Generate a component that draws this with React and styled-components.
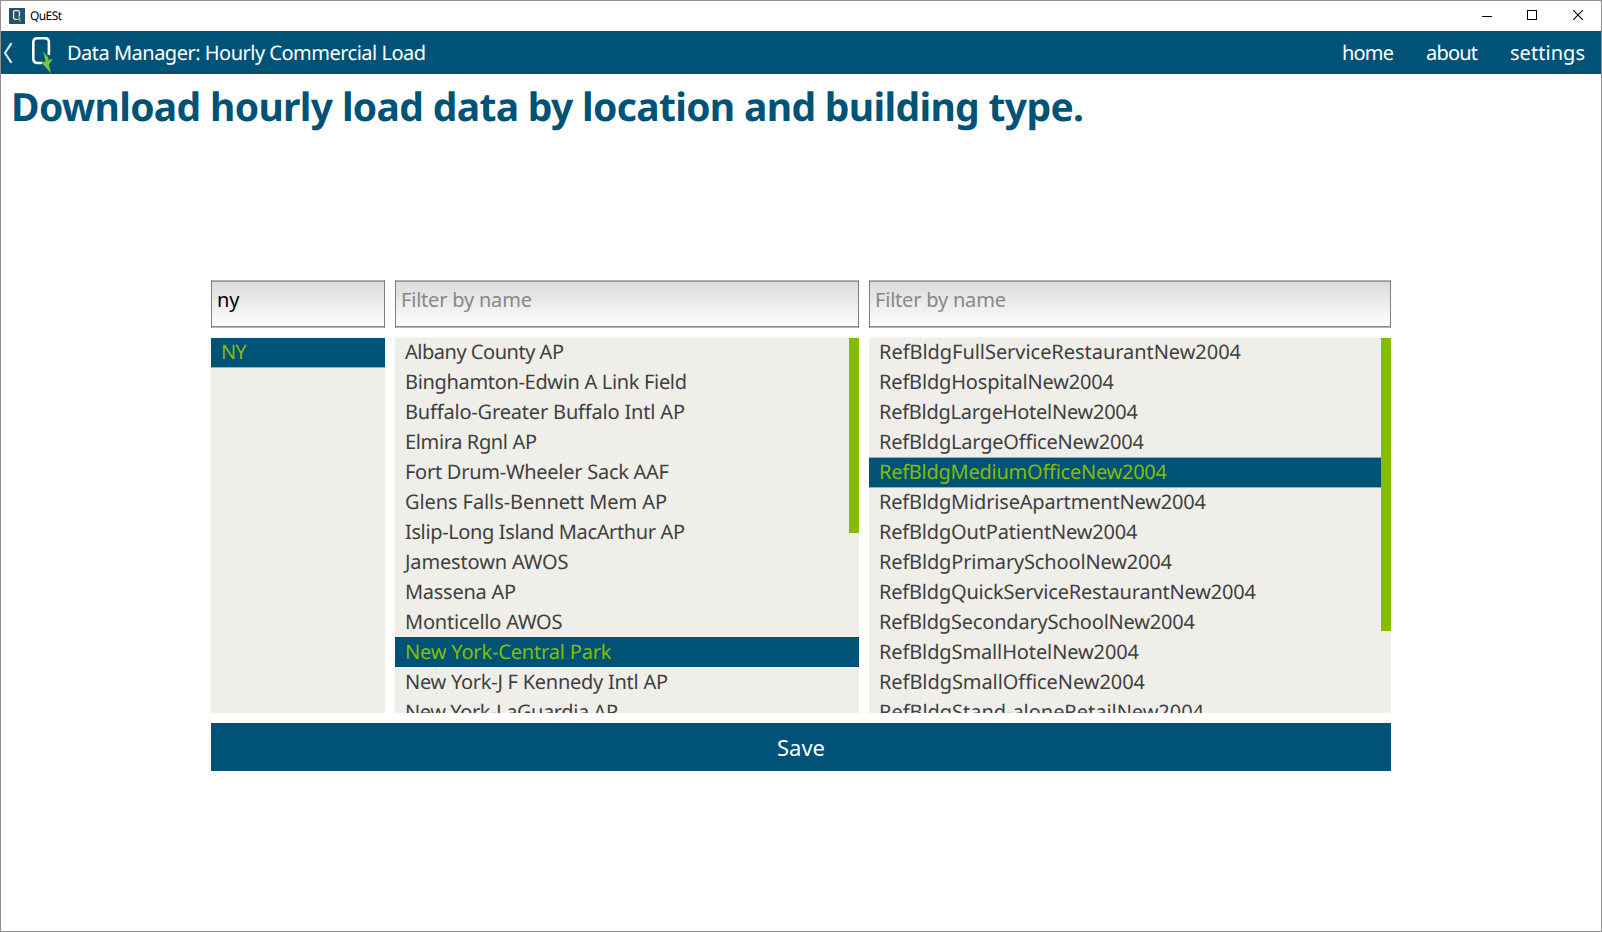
import React, { useLayoutEffect, useRef, useState } from "react";
import styled, { createGlobalStyle, css } from "styled-components";

const BLUE = "#005376";
const GREEN = "#84bd00";
const PANEL = "#efeee9";

const GlobalStyle = createGlobalStyle`
  *, *::before, *::after { box-sizing: border-box; }
  body {
    margin: 0;
    background: #fff;
    font-family: "Noto Sans", "Open Sans", sans-serif;
    text-rendering: geometricPrecision;
  }
`;

const Window = styled.div`
  display: flex;
  flex-direction: column;
  width: 1602px;
  height: 932px;
  border: 1px solid #919191;
  background: #fff;
  overflow: hidden;
`;

const TitleBar = styled.header`
  display: flex;
  align-items: center;
  height: 30px;
  padding: 0 17px 0 8px;
`;

const AppName = styled.span`
  flex: 1;
  margin-left: 5px;
  font-size: 12px;
  line-height: 16px;
  color: #000;
`;

const WindowControls = styled.div`
  display: flex;
  gap: 35px;
  margin-top: -2px;

  svg { display: block; }
`;

const NavBar = styled.nav`
  display: flex;
  align-items: center;
  height: 43px;
  padding: 0 16px 0 2px;
  background: ${BLUE};
  color: #fff;
  font-size: 20px;
  line-height: 30px;
`;

const LogoSvg = styled.svg`
  margin: 4px 0 0 18px;
`;

const NavTitle = styled.div`
  flex: 1;
  margin-left: 14px;
`;

const NavLinks = styled.div`
  display: flex;
  gap: 32px;
`;

const NavLink = styled.a`
  color: #fff;
`;

const Heading = styled.h1`
  margin: 0;
  padding: 8px 0 0 10px;
  height: 206px;
  font-size: 39px;
  line-height: 50px;
  font-weight: 700;
  color: ${BLUE};
`;

const Picker = styled.main`
  display: grid;
  grid-template-columns: 174px 464px 522px;
  grid-template-rows: 48px 376px 48px;
  column-gap: 10px;
  row-gap: 9px;
  justify-content: center;
`;

const FilterInput = styled.input`
  width: 100%;
  height: 48px;
  padding: 0 5px 9px;
  border: 1px solid #7c7c7c;
  border-top-color: #b5b5b5;
  border-bottom-color: #b5b5b5;
  border-radius: 0;
  outline: none;
  background: linear-gradient(#dcdcdc, #e6e6e6 35%, #fff);
  box-shadow: inset 0 1px #9a9a9a, inset 0 -1px #8c8c8c;
  font: 20px/28px "Noto Sans", sans-serif;
  letter-spacing: ${(p) => p.$tracking || 0}px;
  color: #000;

  &::placeholder { color: #888; opacity: 1; }
`;

const ListPanel = styled.section`
  display: flex;
  height: 376px;
  overflow: hidden;
  background: ${PANEL};
  border-top: 1px solid #f7f6f4;
`;

const Rows = styled.ul`
  flex: 1;
  min-width: 0;
  margin: -1px 0 0;
  padding: 0;
  list-style: none;
`;

const Row = styled.li`
  height: 30px;
  padding-left: 10px;
  font-size: 20px;
  line-height: 29px;
  white-space: nowrap;
  color: #404040;
  ${(p) =>
    p.$selected &&
    css`
      color: ${GREEN};
      background: ${BLUE};
      margin-right: ${p.$underBar ? -10 : 0}px;
    `}
  ${(p) =>
    p.$selected &&
    p.$soft &&
    css`
      height: 31px;
      margin-bottom: -1px;
      line-height: 27px;
      border-top: 1px solid #8fb0bd;
      border-bottom: 1px solid #8fb0bd;
    `}
`;

const ScrollBar = styled.div`
  width: 10px;
  height: ${(p) => p.$length}px;
  background: ${GREEN};
`;

const SaveButton = styled.button`
  grid-column: 1 / -1;
  height: 48px;
  margin-top: 1px;
  padding: 0 0 1px;
  border: 0;
  background: ${BLUE};
  color: #fff;
  font: 22px/30px "Noto Sans", sans-serif;
`;

const Run = styled.span`
  display: inline-block;
  white-space: nowrap;
`;

/* Text tracked so that it spans the given width. */
function FitText({ width, children }) {
  const ref = useRef(null);
  const [tracking, setTracking] = useState(0);
  useLayoutEffect(() => {
    const el = ref.current;
    el.style.letterSpacing = "0px";
    const natural = el.getBoundingClientRect().width;
    const value = (width - natural) / (children.length - 1);
    el.style.letterSpacing = `${value}px`;
    setTracking(value);
  }, [width, children]);
  return (
    <Run ref={ref} style={{ letterSpacing: tracking, marginRight: -tracking }}>
      {children}
    </Run>
  );
}

const LOCATIONS = [
  ["Albany County AP", 159],
  ["Binghamton-Edwin A Link Field", 282],
  ["Buffalo-Greater Buffalo Intl AP", 280],
  ["Elmira Rgnl AP", 132],
  ["Fort Drum-Wheeler Sack AAF", 264],
  ["Glens Falls-Bennett Mem AP", 262],
  ["Islip-Long Island MacArthur AP", 280],
  ["Jamestown AWOS", 163.5],
  ["Massena AP", 111],
  ["Monticello AWOS", 157.5],
  ["New York-Central Park", 206.5],
  ["New York-J F Kennedy Intl AP", 263],
  ["New York-LaGuardia AP", 213],
];

const BUILDINGS = [
  ["RefBldgFullServiceRestaurantNew2004", 362],
  ["RefBldgHospitalNew2004", 235],
  ["RefBldgLargeHotelNew2004", 259],
  ["RefBldgLargeOfficeNew2004", 265],
  ["RefBldgMediumOfficeNew2004", 288],
  ["RefBldgMidriseApartmentNew2004", 327],
  ["RefBldgOutPatientNew2004", 258.5],
  ["RefBldgPrimarySchoolNew2004", 293],
  ["RefBldgQuickServiceRestaurantNew2004", 377],
  ["RefBldgSecondarySchoolNew2004", 316],
  ["RefBldgSmallHotelNew2004", 260],
  ["RefBldgSmallOfficeNew2004", 266],
  ["RefBldgStand-aloneRetailNew2004", 325],
];

function List({ items, selected, soft, bar, underBar }) {
  return (
    <ListPanel>
      <Rows>
        {items.map(([name, width]) => (
          <Row key={name} $selected={name === selected} $soft={soft} $underBar={underBar}>
            <FitText width={width}>{name}</FitText>
          </Row>
        ))}
      </Rows>
      {bar && <ScrollBar $length={bar} />}
    </ListPanel>
  );
}

const AppIcon = () => (
  <svg width="16" height="16" viewBox="0 0 16 16">
    <rect width="16" height="16" fill="#25506e" />
    <path d="M9.3 11.3H6.2Q4.6 11.3 4.6 9.7V4.2Q4.6 2.6 6.2 2.6H8.8Q10.4 2.6 10.4 4.2V8.5" fill="none" stroke="#e6edf1" strokeWidth="1.3" />
    <path d="M8.7 8L12.2 10.5L11 11L12 14.3L8.6 11.4L10 11Z" fill="#7ac142" />
  </svg>
);

const BackIcon = () => (
  <svg width="10" height="22" viewBox="0 0 10 22">
    <path d="M8.5 1.2L2 11L8.5 20.8" fill="none" stroke="#e3ecf0" strokeWidth="2.1" />
  </svg>
);

const Logo = () => (
  <LogoSvg width="22" height="38" viewBox="0 0 22 38">
    <path d="M11 27H6.4Q2.3 27 2.3 22.6V6.3Q2.3 2.2 6.4 2.2H13.8Q17.9 2.2 17.9 6.3V19" fill="none" stroke="#fff" strokeWidth="2.6" />
    <path d="M12.2 15.5L17.6 22L16.8 23.7L21.8 23.3L17.9 28.2L20.1 37.4L9.8 25.7L14.6 25.8Z" fill="#7ac142" />
  </LogoSvg>
);

export default function App() {
  return (
    <>
      <GlobalStyle />
      <Window>
        <TitleBar>
          <AppIcon />
          <AppName>
            <FitText width={32}>QuESt</FitText>
          </AppName>
          <WindowControls>
            <svg width="11" height="11"><path d="M1 6.5H11" stroke="#000" /></svg>
            <svg width="11" height="11"><rect x=".5" y=".5" width="9" height="9" fill="none" stroke="#000" /></svg>
            <svg width="11" height="11"><path d="M.2 .2L9.8 9.8M9.8 .2L.2 9.8" stroke="#000" strokeWidth="1.1" /></svg>
          </WindowControls>
        </TitleBar>
        <NavBar>
          <BackIcon />
          <Logo />
          <NavTitle>
            <FitText width={359}>Data Manager: Hourly Commercial Load</FitText>
          </NavTitle>
          <NavLinks>
            <NavLink><FitText width={52}>home</FitText></NavLink>
            <NavLink><FitText width={52}>about</FitText></NavLink>
            <NavLink><FitText width={75}>settings</FitText></NavLink>
          </NavLinks>
        </NavBar>
        <Heading>
          <FitText width={1073}>Download hourly load data by location and building type.</FitText>
        </Heading>
        <Picker>
          <FilterInput defaultValue="ny" />
          <FilterInput placeholder="Filter by name" $tracking={-0.2} />
          <FilterInput placeholder="Filter by name" $tracking={-0.2} />
          <List items={[["NY", 25.5]]} selected="NY" soft />
          <List items={LOCATIONS} selected="New York-Central Park" bar={195} underBar />
          <List items={BUILDINGS} selected="RefBldgMediumOfficeNew2004" soft bar={293} />
          <SaveButton>
            <FitText width={48}>Save</FitText>
          </SaveButton>
        </Picker>
      </Window>
    </>
  );
}
